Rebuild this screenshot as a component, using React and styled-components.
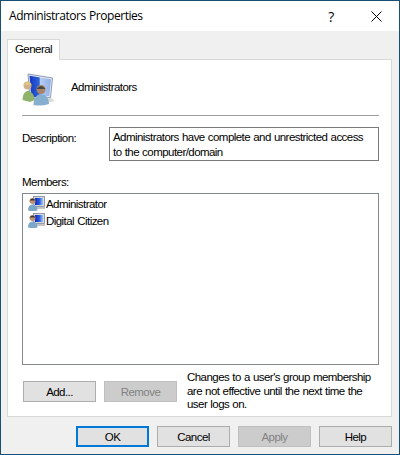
import React from 'react';
import styled, { createGlobalStyle } from 'styled-components';

const Global = createGlobalStyle`
    html, body {
        margin: 0;
        padding: 0;
        background: #f0f0f0;
    }
    * {
        box-sizing: border-box;
    }
`

const Window = styled.div`
    width: 400px;
    height: 455px;
    display: flex;
    flex-direction: column;
    border: 1px solid #1b4f72;
    background: #f0f0f0;
    color: #000;
    font-family: 'Liberation Sans', Arial, sans-serif;
    font-size: 11.5px;
    letter-spacing: -0.55px;
    word-spacing: 0.5px;
    overflow: hidden;
`

const TitleBar = styled.div`
    height: 30px;
    flex: none;
    display: flex;
    align-items: center;
    background: #fff;
    padding-left: 8px;
`

const Title = styled.span`
    flex: 1;
    font-family: 'Open Sans', sans-serif;
    font-size: 12px;
    letter-spacing: -0.45px;
    line-height: 30px;
`

const HelpMark = styled.span`
    width: 46px;
    text-align: center;
    font-family: 'Open Sans', sans-serif;
    font-size: 14px;
    margin-right: -1px;
`

const CloseBox = styled.span`
    width: 46px;
    display: flex;
    justify-content: center;
`

const Body = styled.div`
    flex: 1;
    display: flex;
    flex-direction: column;
    padding: 7px 7px 0 6px;
`

const TabStrip = styled.div`
    height: 21px;
    flex: none;
    display: flex;
    align-items: flex-end;
`

const Tab = styled.div`
    width: 53px;
    height: 21px;
    margin-bottom: -1px;
    position: relative;
    z-index: 1;
    background: #fff;
    border: 1px solid #d9d9d9;
    border-bottom: none;
    text-align: center;
    line-height: 19px;
`

const Panel = styled.div`
    height: 358px;
    flex: none;
    display: flex;
    flex-direction: column;
    background: #fff;
    border: 1px solid #d9d9d9;
    padding: 13px 12px 0 14px;
`

const Header = styled.div`
    height: 32px;
    display: flex;
    align-items: center;
    gap: 16px;
`

const HeaderName = styled.span`
    margin-top: -4px;
`

const Separator = styled.div`
    height: 1px;
    background: #a0a0a0;
    margin-top: 10px;
`

const DescriptionRow = styled.div`
    display: flex;
    align-items: flex-start;
    margin-top: 11px;
`

const Label = styled.span`
    width: 87px;
    flex: none;
    padding-top: 5px;
`

const DescriptionBox = styled.div`
    width: 270px;
    height: 34px;
    border: 1px solid #7a7a7a;
    padding: 2px 10px 2px 3px;
    line-height: 14.5px;
`

const MembersLabel = styled.div`
    margin-top: 14px;
    line-height: 14px;
`

const MemberList = styled.div`
    height: 172px;
    margin-top: 4px;
    border: 1px solid #828790;
    padding: 1px 5px;
`

const Member = styled.div`
    height: 17px;
    display: flex;
    align-items: center;
    gap: 1px;
`

const ActionRow = styled.div`
    display: flex;
    margin-top: 6px;
    padding-left: 1px;
`

const Note = styled.div`
    width: 195px;
    margin-left: 10px;
    line-height: 13.5px;
`

const ActionButtons = styled.div`
    display: flex;
    gap: 8px;
    padding-top: 10px;
`

const Button = styled.div`
    width: 73px;
    height: 21px;
    display: flex;
    align-items: center;
    justify-content: center;
    background: ${p => (p.$disabled ? '#cccccc' : '#e1e1e1')};
    color: ${p => (p.$disabled ? '#838383' : '#000')};
    border: ${p => (p.$primary ? '2px solid #0078d7' : `1px solid ${p.$disabled ? '#bfbfbf' : '#adadad'}`)};
`

const Footer = styled.div`
    display: flex;
    justify-content: flex-end;
    gap: 8px;
    margin-top: 9px;
`

function GroupIcon() {
    return (
        <svg width="33" height="33" viewBox="0 0 33 33">
            <defs>
                <linearGradient id="groupScreen" x1="0" y1="0" x2="1" y2="0">
                    <stop offset="0" stopColor="#1238c4" />
                    <stop offset="0.45" stopColor="#2f62d8" />
                    <stop offset="0.5" stopColor="#b9cdf0" />
                    <stop offset="1" stopColor="#8fb0e6" />
                </linearGradient>
            </defs>
            <path d="M12 27 L29 25 L32.5 28 L24 30 Z" fill="#d8d8d8" />
            <path d="M6 1 L30.5 5 L28.5 24.5 L8 26 Z" fill="#e4e8f0" stroke="#8d9ab8" />
            <path d="M7.5 2.8 L29 6.2 L27.2 23 L9.3 24.4 Z" fill="url(#groupScreen)" />
            <path d="M0.5 27 Q0.5 19 6 17.5 Q12 19 13 27 L8 29 Z" fill="#8fb36c" />
            <circle cx="5.5" cy="12.5" r="4" fill="#d0b08c" />
            <path d="M1.5 12 Q5.5 5.5 9.5 12 Z" fill="#dcc878" />
            <path d="M11.5 32 Q11.5 22 19 21 Q27 22 27 31 Q19 33.5 11.5 32 Z" fill="#86aece" />
            <circle cx="19" cy="16.5" r="4.5" fill="#a88468" />
            <path d="M14.5 16 Q19 10 23.5 16 Z" fill="#45463f" />
        </svg>
    )
}

function MemberIcon() {
    return (
        <svg width="17" height="17" viewBox="0 0 17 17">
            <defs>
                <linearGradient id="memberScreen" x1="0" y1="0" x2="1" y2="0">
                    <stop offset="0" stopColor="#0a28c0" />
                    <stop offset="0.55" stopColor="#2a5ce0" />
                    <stop offset="1" stopColor="#a6c8f2" />
                </linearGradient>
            </defs>
            <path d="M8 12 L17 12 L17 14 L9 14 Z" fill="#c4c4c4" />
            <rect x="5.5" y="1.5" width="11" height="10" fill="#d4d9e2" stroke="#7d8698" strokeWidth="0.8" />
            <rect x="7" y="3" width="8" height="7" fill="url(#memberScreen)" />
            <path d="M0 15.5 Q0 9.5 4.5 9.5 Q9.5 9.5 9.5 15.5 Q5 16.5 0 15.5 Z" fill="#7ea8c8" />
            <circle cx="4.5" cy="6" r="3" fill="#c09270" />
            <path d="M1.5 5.5 Q4.5 1.5 7.5 5.5 Z" fill="#3c3a38" />
        </svg>
    )
}

export default function App() {
    return (
        <Window>
            <Global />
            <TitleBar>
                <Title>Administrators Properties</Title>
                <HelpMark>?</HelpMark>
                <CloseBox>
                    <svg width="11" height="11" viewBox="0 0 11 11">
                        <path d="M0.5 0.5 L10.5 10.5 M10.5 0.5 L0.5 10.5" stroke="#000" fill="none" />
                    </svg>
                </CloseBox>
            </TitleBar>
            <Body>
                <TabStrip>
                    <Tab>General</Tab>
                </TabStrip>
                <Panel>
                    <Header>
                        <GroupIcon />
                        <HeaderName>Administrators</HeaderName>
                    </Header>
                    <Separator />
                    <DescriptionRow>
                        <Label>Description:</Label>
                        <DescriptionBox>
                            Administrators have complete and unrestricted access to the computer/domain
                        </DescriptionBox>
                    </DescriptionRow>
                    <MembersLabel>Members:</MembersLabel>
                    <MemberList>
                        <Member><MemberIcon />Administrator</Member>
                        <Member><MemberIcon />Digital Citizen</Member>
                    </MemberList>
                    <ActionRow>
                        <ActionButtons>
                            <Button>Add...</Button>
                            <Button $disabled>Remove</Button>
                        </ActionButtons>
                        <Note>
                            Changes to a user's group membership are not effective until the next time the user logs on.
                        </Note>
                    </ActionRow>
                </Panel>
                <Footer>
                    <Button $primary>OK</Button>
                    <Button>Cancel</Button>
                    <Button $disabled>Apply</Button>
                    <Button>Help</Button>
                </Footer>
            </Body>
        </Window>
    )
}
